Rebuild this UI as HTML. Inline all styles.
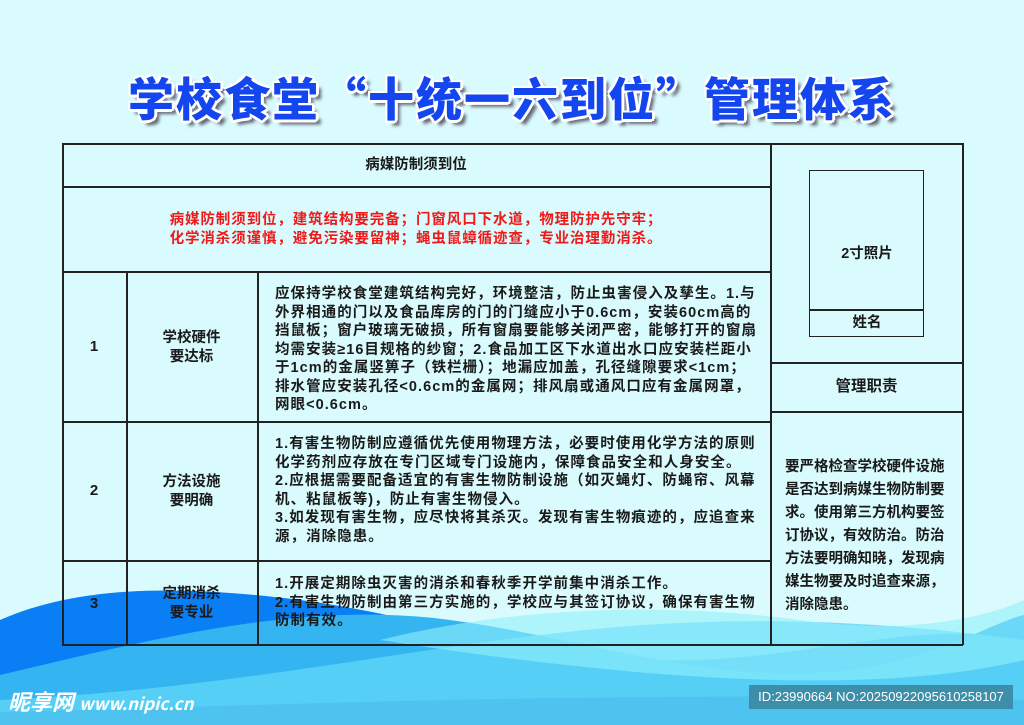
<!DOCTYPE html>
<html><head><meta charset="utf-8"><style>
*{margin:0;padding:0}
body{width:1024px;height:725px;overflow:hidden;background:#d9fbfd;position:relative;font-family:"Liberation Sans","Noto Sans CJK SC",sans-serif;color:#111}
.a{position:absolute}
.h{position:absolute;height:1.5px;background:#222}
.v{position:absolute;width:1.5px;background:#222}
.t{position:absolute;font-size:14.5px;line-height:18.5px;font-weight:bold;color:#1a1a1a;white-space:nowrap}
.c{text-align:center}
.title{position:absolute;left:0;width:1024px;top:64px;text-align:center;font-family:"Noto Sans CJK SC",sans-serif;font-weight:900;font-size:46px;color:#1446f0;letter-spacing:2px;text-shadow:2px 2px 0 #fff,-2px -2px 0 #fff,2px -2px 0 #fff,-2px 2px 0 #fff,0 3px 0 #fff,3px 0 0 #fff,5px 5px 3px #667}
</style></head><body>
<svg class="a" style="left:0;top:0" width="1024" height="725">
<path d="M0 620 C80 585 180 585 300 600 C420 615 560 665 700 660 C820 655 920 620 1024 640 L1024 725 L0 725Z" fill="#0a7ef5"/>
<path d="M0 675 C150 640 300 600 450 620 C600 640 750 700 900 660 C960 645 1000 620 1024 615 L1024 725 L0 725Z" fill="#35b4f2"/>
<path d="M0 700 C200 690 350 660 500 640 C650 620 800 610 1024 640 L1024 725 L0 725Z" fill="#5fd6f7" opacity="0.8"/>
<path d="M380 640 C500 610 650 600 800 620 C900 635 980 620 1024 600 L1024 660 C900 690 700 690 380 640Z" fill="#8ff0fa" opacity="0.6"/>
<path d="M0 725 L0 712 C300 705 600 690 1024 700 L1024 725Z" fill="#4ec3f0"/>
</svg>
<div class="title">学校食堂“十统一六到位”管理体系</div>
<div class="h" style="left:62px;top:143px;width:901px"></div>
<div class="h" style="left:62px;top:186px;width:708px"></div>
<div class="h" style="left:62px;top:271px;width:708px"></div>
<div class="h" style="left:62px;top:421px;width:708px"></div>
<div class="h" style="left:62px;top:560px;width:708px"></div>
<div class="h" style="left:62px;top:644px;width:901px"></div>
<div class="h" style="left:770px;top:362px;width:193px"></div>
<div class="h" style="left:770px;top:411px;width:193px"></div>
<div class="v" style="left:62px;top:143px;height:502px"></div>
<div class="v" style="left:126px;top:271px;height:374px"></div>
<div class="v" style="left:257px;top:271px;height:374px"></div>
<div class="v" style="left:770px;top:143px;height:502px"></div>
<div class="v" style="left:962px;top:143px;height:502px"></div>
<div class="a" style="left:809px;top:170px;width:113px;height:165px;border:1.5px solid #222"></div>
<div class="h" style="left:809px;top:309px;width:115px"></div>
<div class="t c" style="left:62px;width:708px;top:156px">病媒防制须到位</div>
<div class="t c" style="left:62px;width:708px;top:211px;color:#f01818;letter-spacing:0.9px">病媒防制须到位，建筑结构要完备；门窗风口下水道，物理防护先守牢；<br>化学消杀须谨慎，避免污染要留神；蝇虫鼠蟑循迹查，专业治理勤消杀。</div>
<div class="t c" style="left:62px;width:64px;top:338px;font-size:15px">1</div>
<div class="t c" style="left:126px;width:131px;top:329px">学校硬件<br>要达标</div>
<div class="t" style="left:275px;top:285px;letter-spacing:1.05px">应保持学校食堂建筑结构完好，环境整洁，防止虫害侵入及孳生。1.与<br>外界相通的门以及食品库房的门的门缝应小于0.6cm，安装60cm高的<br>挡鼠板；窗户玻璃无破损，所有窗扇要能够关闭严密，能够打开的窗扇<br>均需安装≥16目规格的纱窗；2.食品加工区下水道出水口应安装栏距小<br>于1cm的金属竖箅子（铁栏栅）；地漏应加盖，孔径缝隙要求&lt;1cm；<br>排水管应安装孔径&lt;0.6cm的金属网；排风扇或通风口应有金属网罩，<br>网眼&lt;0.6cm。</div>
<div class="t c" style="left:62px;width:64px;top:482px;font-size:15px">2</div>
<div class="t c" style="left:126px;width:131px;top:473px">方法设施<br>要明确</div>
<div class="t" style="left:275px;top:435px;letter-spacing:1.05px">1.有害生物防制应遵循优先使用物理方法，必要时使用化学方法的原则<br>化学药剂应存放在专门区域专门设施内，保障食品安全和人身安全。<br>2.应根据需要配备适宜的有害生物防制设施（如灭蝇灯、防蝇帘、风幕<br>机、粘鼠板等)，防止有害生物侵入。<br>3.如发现有害生物，应尽快将其杀灭。发现有害生物痕迹的，应追查来<br>源，消除隐患。</div>
<div class="t c" style="left:62px;width:64px;top:595px;font-size:15px">3</div>
<div class="t c" style="left:126px;width:131px;top:585px">定期消杀<br>要专业</div>
<div class="t" style="left:275px;top:575px;letter-spacing:1.05px">1.开展定期除虫灭害的消杀和春秋季开学前集中消杀工作。<br>2.有害生物防制由第三方实施的，学校应与其签订协议，确保有害生物<br>防制有效。</div>
<div class="t c" style="left:809px;width:116px;top:245px">2寸照片</div>
<div class="t c" style="left:809px;width:116px;top:314px">姓名</div>
<div class="t c" style="left:770px;width:193px;top:378px;font-size:15.5px">管理职责</div>
<div class="t" style="left:785px;top:456px;line-height:23px">要严格检查学校硬件设施<br>是否达到病媒生物防制要<br>求。使用第三方机构要签<br>订协议，有效防治。防治<br>方法要明确知晓，发现病<br>媒生物要及时追查来源，<br>消除隐患。</div>
<div class="a" style="left:8px;top:685px;color:#fff;font-weight:bold;font-size:22px;font-style:italic;font-family:'Noto Sans CJK SC',sans-serif">昵享网 <span style="font-size:17px">www.nipic.cn</span></div>
<div class="a" style="left:749px;top:685px;width:264px;height:24px;background:#3d8ea8;color:#fff;font-size:13px;line-height:24px;text-align:center">ID:23990664 NO:20250922095610258107</div>
</body></html>
